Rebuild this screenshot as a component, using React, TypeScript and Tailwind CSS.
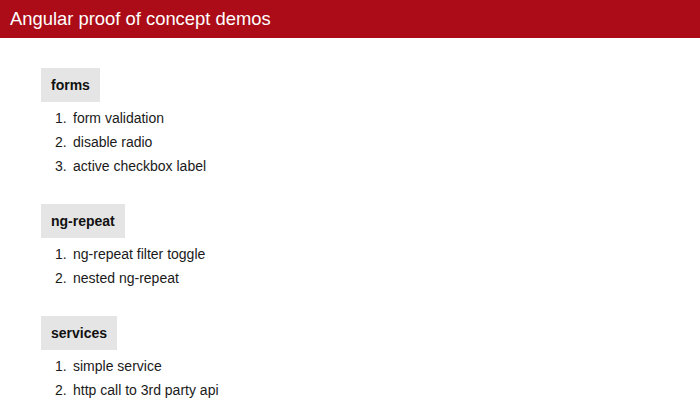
import React from "react";

const sections = [
  { title: "forms", items: ["form validation", "disable radio", "active checkbox label"] },
  { title: "ng-repeat", items: ["ng-repeat filter toggle", "nested ng-repeat"] },
  { title: "services", items: ["simple service", "http call to 3rd party api"] },
];

export default function App() {
  return (
    <div className="w-[700px] h-[414px] bg-white overflow-hidden" style={{ fontFamily: '"Liberation Sans", Arial, sans-serif' }}>
      <div className="h-[38px] bg-[#ab0c17] flex items-center pl-[10px]">
        <h1 className="text-[18.4px] leading-none text-white">Angular proof of concept demos</h1>
      </div>
      <div className="pl-[41px] pt-[30px] flex flex-col gap-[26px]">
        {sections.map((s) => (
          <div key={s.title} className="flex flex-col items-start">
            <div className="h-[34px] px-[10px] bg-[#e5e5e5] flex items-center text-[14px] font-bold text-[#111]">
              {s.title}
            </div>
            <ol className="mt-[4px] pl-[14px]">
              {s.items.map((it, i) => (
                <li key={it} className="flex h-[24px] items-center text-[14px] text-[#1a1a1a]">
                  <span className="w-[18px]">{i + 1}.</span>
                  <span>{it}</span>
                </li>
              ))}
            </ol>
          </div>
        ))}
      </div>
    </div>
  );
}
